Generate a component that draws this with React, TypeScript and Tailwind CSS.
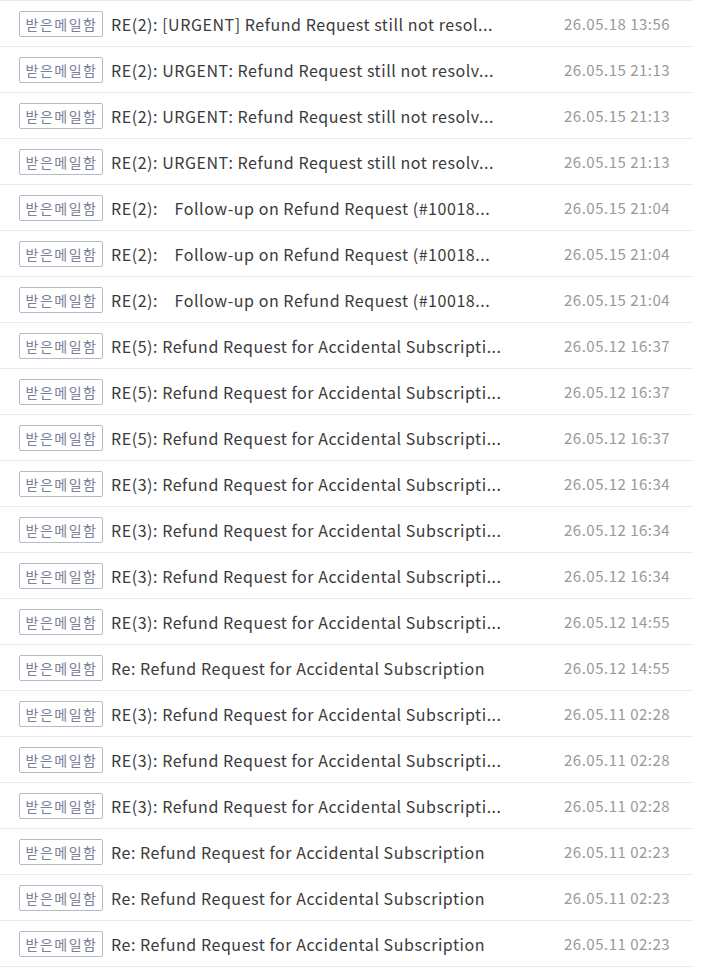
import React from "react";

const rows: [string, string][] = [
  ["RE(2): [URGENT] Refund Request still not resol...", "26.05.18 13:56"],
  ["RE(2): URGENT: Refund Request still not resolv...", "26.05.15 21:13"],
  ["RE(2): URGENT: Refund Request still not resolv...", "26.05.15 21:13"],
  ["RE(2): URGENT: Refund Request still not resolv...", "26.05.15 21:13"],
  ["RE(2):    Follow-up on Refund Request (#10018...", "26.05.15 21:04"],
  ["RE(2):    Follow-up on Refund Request (#10018...", "26.05.15 21:04"],
  ["RE(2):    Follow-up on Refund Request (#10018...", "26.05.15 21:04"],
  ["RE(5): Refund Request for Accidental Subscripti...", "26.05.12 16:37"],
  ["RE(5): Refund Request for Accidental Subscripti...", "26.05.12 16:37"],
  ["RE(5): Refund Request for Accidental Subscripti...", "26.05.12 16:37"],
  ["RE(3): Refund Request for Accidental Subscripti...", "26.05.12 16:34"],
  ["RE(3): Refund Request for Accidental Subscripti...", "26.05.12 16:34"],
  ["RE(3): Refund Request for Accidental Subscripti...", "26.05.12 16:34"],
  ["RE(3): Refund Request for Accidental Subscripti...", "26.05.12 14:55"],
  ["Re: Refund Request for Accidental Subscription", "26.05.12 14:55"],
  ["RE(3): Refund Request for Accidental Subscripti...", "26.05.11 02:28"],
  ["RE(3): Refund Request for Accidental Subscripti...", "26.05.11 02:28"],
  ["RE(3): Refund Request for Accidental Subscripti...", "26.05.11 02:28"],
  ["Re: Refund Request for Accidental Subscription", "26.05.11 02:23"],
  ["Re: Refund Request for Accidental Subscription", "26.05.11 02:23"],
  ["Re: Refund Request for Accidental Subscription", "26.05.11 02:23"],
];

export default function App() {
  return (
    <div
      className="bg-white w-[705px] h-[968px] overflow-hidden"
      style={{ fontFamily: '"Noto Sans CJK KR", "Noto Sans", sans-serif' }}
    >
      <div className="w-[693px] border-b border-[#ebebeb]">
        {rows.map(([subject, date], i) => (
          <div
            key={i}
            className="flex items-center h-[46px] border-t border-[#ebebeb] pl-[19px]"
          >
            <span className="flex items-center justify-center w-[84px] h-[26px] border border-[#b4b8c8] rounded-[2px] text-[14px] leading-none text-[#7c8098] tracking-[1.5px] pl-[1px] shrink-0">
              받은메일함
            </span>
            <span className="ml-[8px] w-[453px] shrink-0 text-[16px] leading-[22px] tracking-[0.55px] text-[#3a3a3a] whitespace-pre pt-[1px]">
              {subject}
            </span>
            <span className="text-[15px] leading-[22px] tracking-[0.5px] text-[#999999] pt-[1px]">
              {date}
            </span>
          </div>
        ))}
      </div>
    </div>
  );
}
